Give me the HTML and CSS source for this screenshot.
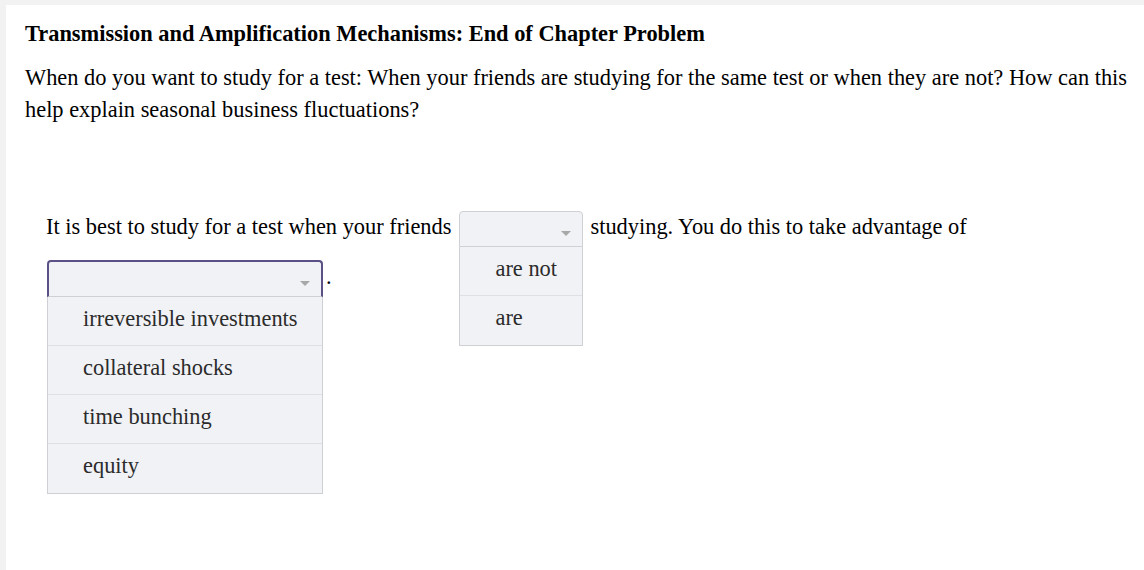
FILE: index.html
```html
<!DOCTYPE html>
<html>
<head>
<meta charset="utf-8">
<link rel="stylesheet" href="styles.css">
</head>
<body>
<div class="card">
  <h1 class="title">Transmission and Amplification Mechanisms: End of Chapter Problem</h1>
  <p class="question">When do you want to study for a test: When your friends are studying for the same test or when they are not? How can this help explain seasonal business fluctuations?</p>
  <div class="answer">
    It is best to study for a test when your friends<span class="dd dd-short"><span class="dd-box"><span class="caret"></span></span><span class="dd-list"><span class="dd-opt">are not</span><span class="dd-opt">are</span></span></span>studying. You do this to take advantage of
    <span class="dd dd-long"><span class="dd-box focus"><span class="caret"></span></span><span class="dd-list"><span class="dd-opt">irreversible investments</span><span class="dd-opt">collateral shocks</span><span class="dd-opt">time bunching</span><span class="dd-opt">equity</span></span></span>.
  </div>
</div>
</body>
</html>
```

FILE: styles.css
```css
html, body {
  margin: 0;
  padding: 0;
  background: #f2f2f2;
  height: 100%;
  overflow: hidden;
}
body {
  padding: 5px 0 0 6px;
  box-sizing: border-box;
  font-family: "Liberation Serif", "Times New Roman", serif;
  color: #000;
}
.card {
  background: #fff;
  height: 100%;
  padding: 19px 0 0 19px;
  box-sizing: border-box;
}
.title {
  margin: 0;
  font-size: 22.4px;
  font-weight: bold;
  line-height: 20px;
}
.question {
  margin: 18px 10px 0 0;
  font-size: 22.4px;
  line-height: 32px;
}
.answer {
  margin: 76px 0 0 21px;
  font-size: 22.4px;
  line-height: 50px;
}
.dd {
  position: relative;
  display: inline-block;
  vertical-align: middle;
  margin: 0 7px 0 8px;
  line-height: normal;
}
.dd-short { width: 124px; }
.dd-long { width: 276px; margin-left: 1px; margin-right: 3px; }
.dd-box {
  display: block;
  height: 36px;
  box-sizing: border-box;
  background: #f1f2f6;
  border: 1px solid #cfd0d4;
  border-radius: 4px 4px 0 0;
  position: relative;
}
.dd-box.focus {
  border: 2px solid #5c5186;
  border-bottom: 1px solid #cfd0d4;
  height: 37px;
}
.caret {
  position: absolute;
  right: 11px;
  top: 19px;
  width: 0;
  height: 0;
  border-left: 5px solid transparent;
  border-right: 5px solid transparent;
  border-top: 5px solid #a8a8a8;
}
.dd-list {
  position: absolute;
  left: 0;
  top: 100%;
  width: 100%;
  background: #f1f2f6;
  border: 1px solid #cfd0d4;
  border-top: none;
  box-sizing: border-box;
  z-index: 2;
}
.dd-opt {
  display: block;
  height: 49px;
  line-height: 43px;
  padding-left: 35px;
  font-size: 22.4px;
  color: #2b2b2b;
  border-bottom: 1px solid #dfe0e4;
  box-sizing: border-box;
}
.dd-opt:last-child { border-bottom: none; }
```
